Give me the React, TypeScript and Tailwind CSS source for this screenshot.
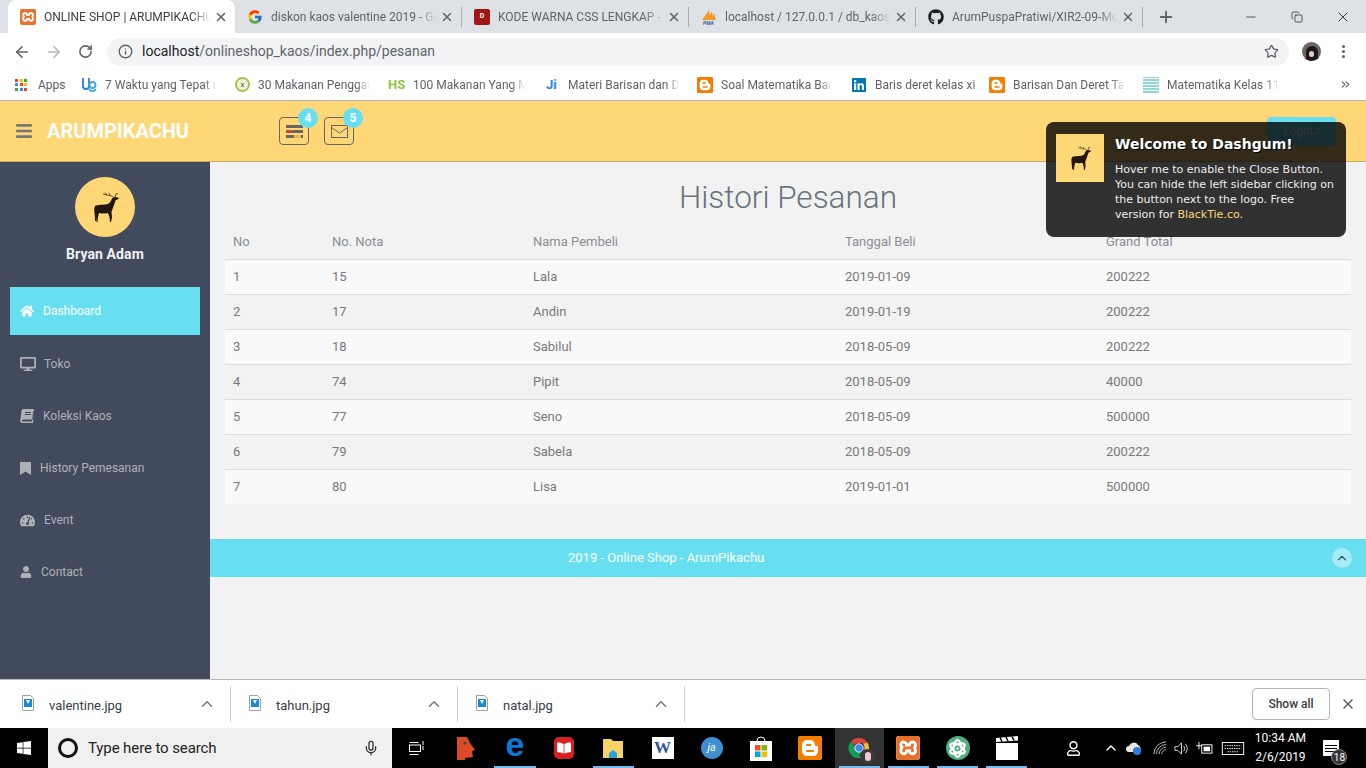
import React from "react";
import { ArrowLeft, ArrowRight, RotateCw, Info, Star, X, Plus, Minus, Copy, ChevronUp, ChevronsRight, Mic } from "lucide-react";
import { FaBars, FaHome, FaDesktop, FaBookOpen, FaTachometerAlt, FaUser, FaGithub, FaLinkedin, FaWindows, FaRegUser, FaAtom } from "react-icons/fa";
import { FcGoogle } from "react-icons/fc";
import { SiBlogger, SiXampp } from "react-icons/si";

const Deer = ({ className = "" }: { className?: string }) => (
  <svg viewBox="0 0 40 40" className={className} fill="#21150e">
    <path d="M10 19C12 17.500 20 18 23 17C25 16 26 14 27 11.500L29 10L33 10.500L34 11.500L30.500 13.500L29 18C28 21 27 23 26.500 25L27 30L26 35L25 35L24.500 30L23 26C20 27 17 26.500 14 26L13 30L12.500 35L11.500 35L11.500 30L11 34L10 34L9.800 28C9 24 9 21 10 19z" />
    <path d="M28.500 10.500C27 8 24 9 22 8L18 7M25 8.500L24 6M22 8L20 5.500M30 10L31 7L33 6.500" stroke="#21150e" strokeWidth="0.7" fill="none" />
  </svg>
);

const Chrome = () => (
  <svg viewBox="0 0 24 24" className="w-[22px] h-[22px]">
    <path d="M12 1a11 11 0 0 1 9.500 5.500H12a5.500 5.500 0 0 0-5 3L3.500 4.500A11 11 0 0 1 12 1z" fill="#db4437" />
    <path d="M21.500 6.500A11 11 0 0 1 12 23l4.800-8.200A5.500 5.500 0 0 0 16 7z" fill="#fbc02d" />
    <path d="M12 23A11 11 0 0 1 3.500 4.500L8 12.500a5.500 5.500 0 0 0 6 3.500z" fill="#0f9d58" />
    <circle cx="12" cy="12" r="4.500" fill="#4285f4" stroke="#fff" strokeWidth="1" />
  </svg>
);

const Thumb = () => (
  <svg viewBox="0 0 12 16" className="w-[12px] h-[16px]">
    <path d="M.5.500h8l3 3v12H.5z" fill="#fff" stroke="#9aa0a6" />
    <rect x="2" y="4" width="8" height="8" fill="#1a86d8" />
    <path d="M4 5h4l-2 4z" fill="#fff" />
  </svg>
);

const Fav = ({ c, children }: { c: string; children?: React.ReactNode }) => (
  <span className={`w-4 h-4 rounded-[2px] flex items-center justify-center text-white text-[7px] font-bold ${c}`}>{children}</span>
);

const tabs = [
  { t: "ONLINE SHOP | ARUMPIKACHU", i: <SiXampp className="text-[#e8702a] w-4 h-4" />, active: true },
  { t: "diskon kaos valentine 2019 - Google", i: <FcGoogle className="w-4 h-4" /> },
  { t: "KODE WARNA CSS LENGKAP - Dian", i: <Fav c="bg-[#a31515]">D</Fav> },
  { t: "localhost / 127.0.0.1 / db_kaos | phpMy", i: <svg viewBox="0 0 16 16" className="w-4 h-4"><path d="M1 11L8 1l1 10zM6 11l5-9 1 9zM10 11l3-7 2 7z" fill="#f09a2a" /><text x="2" y="16" fontSize="5" fontWeight="700" fontStyle="italic" fill="#3a5a8c">PMA</text></svg> },
  { t: "ArumPuspaPratiwi/XIR2-09-Mobile", i: <FaGithub className="w-4 h-4 text-[#1b1f23]" /> },
];

const bookmarks = [
  { w: "w-[154px]", t: "7 Waktu yang Tepat untuk", g: "gap-2", i: <svg viewBox="0 0 16 16" className="w-4 h-4" fill="none" stroke="#2a7de1" strokeWidth="1.800"><path d="M2 1v8a3 3 0 0 0 6 0V1" /><circle cx="11.500" cy="8" r="3" stroke="#3fa9d8" /><path d="M8 12a4 4 0 0 0 7 0" stroke="#3fa9d8" /></svg> },
  { w: "w-[153px]", t: "30 Makanan Penggaruk", g: "gap-2", i: <span className="w-[15px] h-[15px] rounded-full border-2 border-[#a5c24f] bg-[#f2f2d8] text-[8px] flex items-center justify-center text-[#555]">x</span> },
  { w: "w-[154px]", t: "100 Makanan Yang Mengandung", g: "gap-2", i: <span className="text-[#8dc63f] font-bold text-[13px] w-[17px]">HS</span> },
  { w: "w-[155px]", t: "Materi Barisan dan Deret", g: "gap-[11px]", i: <span className="ml-1 text-[#1e88e5] font-bold text-[13px] w-[11px]">Ji</span> },
  { w: "w-[154px]", t: "Soal Matematika Barisan", g: "gap-2", i: <SiBlogger className="w-4 h-4 text-[#f57d00]" /> },
  { w: "w-[138px]", t: "Baris deret kelas xi", g: "gap-2", i: <FaLinkedin className="w-4 h-4 text-[#0077b5]" /> },
  { w: "w-[154px]", t: "Barisan Dan Deret Tak Hingga", g: "gap-2", i: <SiBlogger className="w-4 h-4 text-[#f57d00]" /> },
  { w: "w-[146px]", t: "Matematika Kelas 11 SMA", g: "gap-2", i: <span className="w-4 h-4 bg-[repeating-linear-gradient(0deg,#8fd8d8_0px,#8fd8d8_2px,#ffffff_2px,#ffffff_3px)]" /> },
];

const BookIcon = () => (
  <svg viewBox="0 0 14 14" className="w-[14px] h-[14px]" fill="currentColor">
    <path d="M3.500 0H14l-.8 10.500H3.200C2.400 10.500 2 11 2 11.600s.5 1 1.200 1H12l1-10h1l-1 11.400H2.500C1 14 0 13 .2 11.500L1.500 2C1.700.8 2.400 0 3.500 0zM5 3v1h6V3zm-.2 2v1h6V5z" fillRule="evenodd" />
  </svg>
);

const menu = [
  { t: "Dashboard", i: <FaHome className="w-[14px] h-[14px]" />, g: "gap-[9px]", active: true },
  { t: "Toko", i: <FaDesktop className="w-4 h-4" />, g: "gap-2" },
  { t: "Koleksi Kaos", i: <BookIcon />, g: "gap-[9px]" },
  { t: "History Pemesanan", i: <svg viewBox="0 0 11 13" className="w-[11px] h-[13px]" fill="currentColor"><path d="M0 0h11v13L5.500 9.500 0 13z" /></svg>, g: "gap-[9px]" },
  { t: "Event", i: <FaTachometerAlt className="w-[15px] h-[15px]" />, g: "gap-[9px]" },
  { t: "Contact", i: <FaUser className="w-3 h-3" />, g: "gap-[9px]" },
];

const rows = [
  ["1", "15", "Lala", "2019-01-09", "200222"],
  ["2", "17", "Andin", "2019-01-19", "200222"],
  ["3", "18", "Sabilul", "2018-05-09", "200222"],
  ["4", "74", "Pipit", "2018-05-09", "40000"],
  ["5", "77", "Seno", "2018-05-09", "500000"],
  ["6", "79", "Sabela", "2018-05-09", "200222"],
  ["7", "80", "Lisa", "2019-01-01", "500000"],
];

const Shelf = ({ t, first }: { t: string; first?: boolean }) => (
  <div className={`${first ? "w-[231px] pl-[22px]" : "w-[227px] pl-[18px]"} h-[36px] flex items-center border-r border-[#d0d0d0] pr-[14px] text-[#3c4043]`}>
    <span className="-mt-[3px] flex"><Thumb /></span>
    <span className="ml-[15px] mt-[3px] text-[13px] flex-1">{t}</span>
    <ChevronUp className="w-[18px] h-[18px] text-[#777]" />
  </div>
);

const task = [
  <svg viewBox="0 0 16 16" className="w-[16px] h-[16px]" fill="none" stroke="#fff"><path d="M.5 2.500h9M.5 14.500h9" /><rect x=".5" y="5" width="11" height="6.500" /><path d="M14 1v4M14 6v4" /></svg>,
  <svg viewBox="0 0 20 24" className="w-[20px] h-[24px]"><path d="M1 1h10l3 6 5 7-3 1 1 6-8 1v2H1z" fill="#dc4a26" /><circle cx="9" cy="7" r="1.500" fill="#444" /></svg>,
  <span className="text-[34px] leading-[34px] -mt-[8px] font-bold text-[#0b78d7] font-['Liberation_Sans',sans-serif]">e</span>,
  <span className="w-[20px] h-[22px] bg-[#d6211f] rounded-[5px] flex items-center justify-center"><FaBookOpen className="w-[14px] h-[14px] text-white" /></span>,
  <svg viewBox="0 0 22 22" className="w-[22px] h-[22px]"><path d="M1 2h8l2 2h10v17H1z" fill="#f6d365" /><path d="M7 21v-5l4-3 4 3v5z" fill="#2ba0dd" /></svg>,
  <span className="w-[22px] h-[22px] bg-white flex items-center justify-center text-[#2b579a] font-bold text-[17px] font-['Liberation_Serif',serif]">W</span>,
  <span className="w-[22px] h-[22px] rounded-full bg-[#3d8fd0] flex items-center justify-center text-white text-[11px] italic">ja</span>,
  <svg viewBox="0 0 22 26" className="w-[22px] h-[26px]"><path d="M7 6a4 4 0 0 1 8 0" fill="none" stroke="#fff" /><rect y="6" width="22" height="20" fill="#fff" /><rect x="5" y="10" width="5.500" height="5.500" fill="#f25022" /><rect x="11.500" y="10" width="5.500" height="5.500" fill="#7fba00" /><rect x="5" y="16.500" width="5.500" height="5.500" fill="#00a4ef" /><rect x="11.500" y="16.500" width="5.500" height="5.500" fill="#ffb900" /></svg>,
  <SiBlogger className="w-[24px] h-[24px] text-[#f57d00] bg-white rounded-[3px]" />,
  <span className="relative flex"><Chrome /><span className="absolute right-[-5px] bottom-[-5px] w-[15px] h-[15px] rounded-full bg-[#3b3b3b] flex items-center justify-center"><span className="w-[6px] h-[9px] rounded-full bg-[#f3c9d6]" /></span></span>,
  <SiXampp className="w-[24px] h-[24px] text-[#e8702a] bg-white rounded-[3px]" />,
  <span className="w-[24px] h-[24px] rounded-full bg-[#4fb07f] flex items-center justify-center"><FaAtom className="w-[19px] h-[19px] text-white" /></span>,
  <svg viewBox="0 0 22 24" className="w-[22px] h-[24px]"><rect y="7" width="22" height="17" fill="#fff" /><path d="M0 2l22-2v4.500L0 6z" fill="#fff" /><path d="M4 1.500l2 4M10 1l2 4M16 .500l2 4" stroke="#000" strokeWidth="1.500" /></svg>,
];

export default function App() {
  return (
    <div className="relative h-screen w-[1366px] overflow-hidden flex flex-col bg-white font-['Roboto',sans-serif]">
      {/* tab strip */}
      <div className="h-[33px] bg-[#dee1e6] flex items-end pl-[8px] shrink-0">
        {tabs.map((tab, n) => (
          <div key={n} className={`h-[33px] w-[227px] pl-[12px] flex items-center ${tab.active ? "bg-white rounded-t-[8px]" : ""}`}>
            <span className="w-4 h-4 flex items-center justify-center shrink-0">{tab.i}</span>
            <span className={`ml-[8px] w-[167px] overflow-hidden whitespace-nowrap text-[12px] [mask-image:linear-gradient(to_right,black_88%,transparent)] ${tab.active ? "text-[#3c4043]" : "text-[#5f6368]"}`}>{tab.t}</span>
            <X className="ml-[3px] w-[14px] h-[14px] text-[#5f6368] shrink-0" strokeWidth={2.500} />
            {n > 0 && <span className="ml-[7px] w-px h-[20px] bg-[#a9acb0]" />}
          </div>
        ))}
        <div className="h-[33px] flex items-center ml-[14px]"><Plus className="w-[18px] h-[18px] text-[#5f6368]" strokeWidth={2.500} /></div>
        <div className="h-[33px] flex items-center ml-auto text-[#111]">
          <div className="w-[46px] flex justify-center"><Minus className="w-[14px] h-[14px]" strokeWidth={1.200} /></div>
          <div className="w-[46px] flex justify-center"><Copy className="w-[12px] h-[12px]" strokeWidth={1.300} /></div>
          <div className="w-[46px] flex justify-center"><X className="w-[16px] h-[16px]" strokeWidth={1.200} /></div>
        </div>
      </div>
      {/* toolbar */}
      <div className="h-[36px] shrink-0 flex items-center pt-[1px] bg-white">
        <ArrowLeft className="ml-[13px] w-[18px] h-[18px] text-[#5f6368]" strokeWidth={2.200} />
        <ArrowRight className="ml-[14px] w-[18px] h-[18px] text-[#b5b7ba]" strokeWidth={2.200} />
        <RotateCw className="ml-[15px] w-[15px] h-[15px] text-[#5f6368]" strokeWidth={2.500} />
        <div className="ml-[14px] w-[1182px] h-[28px] rounded-full bg-[#f1f3f4] flex items-center pl-[11px] pr-[10px]">
          <Info className="w-[15px] h-[15px] text-[#5f6368]" strokeWidth={2.200} />
          <span className="ml-[9px] text-[14px] text-[#202124]">localhost<span className="text-[#5f6368]">/onlineshop_kaos/index.php/pesanan</span></span>
          <Star className="ml-auto w-[15px] h-[15px] text-[#5f6368]" strokeWidth={2} />
        </div>
        <span className="ml-[13px] w-[19px] h-[19px] rounded-full bg-[#6f6565] overflow-hidden flex items-end justify-center">
          <span className="w-[12px] h-[15px] rounded-t-full bg-[#1d1719] flex justify-center pt-[5px]"><span className="w-[5px] h-[6px] rounded-full bg-[#e8c8c4]" /></span>
        </span>
        <span className="ml-[21px] flex flex-col gap-[2px]">
          <span className="w-[3px] h-[3px] rounded-full bg-[#5f6368]" /><span className="w-[3px] h-[3px] rounded-full bg-[#5f6368]" /><span className="w-[3px] h-[3px] rounded-full bg-[#5f6368]" />
        </span>
      </div>
      {/* bookmarks */}
      <div className="h-[31px] shrink-0 flex items-center text-[12px] text-[#5f6368] bg-white">
        <span className="ml-[15px] w-[12px] h-[12px] grid grid-cols-3 gap-[1.500px]">
          {["bg-[#ea4335]", "bg-[#fbbc05]", "bg-[#34a853]", "bg-[#4285f4]", "bg-[#ea4335]", "bg-[#fbbc05]", "bg-[#34a853]", "bg-[#4285f4]", "bg-[#ea4335]"].map((c, i) => <span key={i} className={c} />)}
        </span>
        <span className="ml-[11px] w-[43px]">Apps</span>
        {bookmarks.map((b, i) => (
          <div key={i} className={`${b.w} flex items-center ${b.g} shrink-0`}>
            <span className="flex shrink-0">{b.i}</span>
            <span className="w-[112px] overflow-hidden whitespace-nowrap [mask-image:linear-gradient(to_right,black_88%,transparent)]">{b.t}</span>
          </div>
        ))}
        <ChevronsRight className="ml-[50px] w-[13px] h-[13px] text-[#5f6368]" />
      </div>
      <div className="h-px shrink-0 bg-[#b8b8b8]" />
      {/* app header */}
      <header className="h-[61px] shrink-0 bg-[#ffd777] border-b border-[#c9ac68] flex items-center">
        <FaBars className="ml-[15px] w-[18px] h-[18px] text-[#777]" />
        <span className="ml-[14px] w-[232px] text-[20px] font-bold text-white">ARUMPIKACHU</span>
        <button className="relative w-[30px] h-[28px] border border-[#666] rounded-[4px] flex items-center justify-center">
          <svg viewBox="0 0 17 13" className="w-[17px] h-[13px]">
            <rect width="17" height="3" fill="#666" />
            <rect y="5" width="17" height="3" fill="#666" /><rect y="5" width="7" height="3" fill="#b5533c" />
            <rect y="10" width="17" height="3" fill="#666" /><rect x="8" y="10" width="7" height="3" fill="#e8b84a" />
          </svg>
          <span className="absolute -top-[10px] -right-[10px] w-[20px] h-[20px] rounded-full bg-[#68dff0] text-white text-[12px] font-bold flex items-center justify-center">4</span>
        </button>
        <button className="relative ml-[15px] w-[30px] h-[28px] border border-[#666] rounded-[4px] flex items-center justify-center">
          <svg viewBox="0 0 17 13" className="w-[17px] h-[13px]" fill="none" stroke="#666"><rect x=".5" y=".5" width="16" height="12" /><path d="M.5 2.500l8 5.500 8-5.500" /></svg>
          <span className="absolute -top-[10px] -right-[10px] w-[20px] h-[20px] rounded-full bg-[#68dff0] text-white text-[12px] font-bold flex items-center justify-center">5</span>
        </button>
        <button className="ml-auto mr-[30px] w-[69px] h-[29px] rounded-[4px] bg-[#68dff0] text-[#f2f2f2] text-[12px]">Logout</button>
      </header>
      {/* body */}
      <div className="flex-1 min-h-0 flex">
        <aside className="w-[210px] shrink-0 bg-[#424a5d] flex flex-col items-center pt-[15px]">
          <div className="w-[60px] h-[60px] rounded-full bg-[#ffd777] flex items-center justify-center">
            <Deer className="w-[40px] h-[40px]" />
          </div>
          <div className="mt-[7px] text-[14px] font-bold tracking-[0.1px] text-[#f2f2f2] leading-[20px]">Bryan Adam</div>
          <nav className="mt-[23px] w-[190px] flex flex-col gap-[4px]">
            {menu.map((m) => (
              <div key={m.t} className={`h-[48px] flex items-center pl-[10px] text-[12px] ${m.g} ${m.active ? "bg-[#68dff0] text-white" : "text-[#aeb2b7] pt-[2px]"}`}>
                {m.i}<span>{m.t}</span>
              </div>
            ))}
          </nav>
        </aside>
        <main className="flex-1 bg-[#f2f2f2] px-[15px] flex flex-col">
          <h1 className="mt-[16px] h-[40px] text-center text-[31.500px] leading-[40px] font-light text-[#68737d]">Histori Pesanan</h1>
          <table className="mt-[6px] w-[1126px] table-fixed border-collapse text-[13px] text-[#797979]">
            <colgroup>
              <col className="w-[99px]" /><col className="w-[201px]" /><col className="w-[312px]" /><col className="w-[261px]" /><col />
            </colgroup>
            <thead>
              <tr className="h-[35px] border-b border-[#dddddd]">
                {["No", "No. Nota", "Nama Pembeli", "Tanggal Beli", "Grand Total"].map((h) => (
                  <th key={h} className="px-[8px] text-left font-normal text-[#8a8f94]">{h}</th>
                ))}
              </tr>
            </thead>
            <tbody>
              {rows.map((r, i) => (
                <tr key={i} className={`h-[35px] border-b border-[#dddddd] last:border-b-0 ${i % 2 === 0 ? "bg-[#f9f9f9]" : "bg-[#f2f2f2]"}`}>
                  {r.map((c, j) => <td key={j} className="px-[8px]">{c}</td>)}
                </tr>
              ))}
            </tbody>
          </table>
          <footer className="mt-[35px] -mx-[15px] h-[38px] shrink-0 bg-[#68dff0] flex items-center text-white text-[13px] pl-[358px]">
            <span>2019 - Online Shop - ArumPikachu</span>
            <span className="ml-auto mr-[14px] w-[20px] h-[20px] rounded-full bg-white/40 flex items-center justify-center">
              <ChevronUp className="w-[14px] h-[14px] text-[#2a5b63]" />
            </span>
          </footer>
        </main>
      </div>
      {/* downloads */}
      <div className="h-[49px] shrink-0 bg-white border-t border-[#b8b8b8] flex items-center">
        <div className="flex"><Shelf t="valentine.jpg" first /><Shelf t="tahun.jpg" /><Shelf t="natal.jpg" /></div>
        <button className="ml-auto w-[78px] h-[32px] border border-[#b5b5b5] rounded-[4px] text-[12px] font-medium text-[#3c4043]">Show all</button>
        <X className="ml-[10px] mr-[10px] w-[16px] h-[16px] text-[#666]" strokeWidth={2.500} />
      </div>
      {/* taskbar */}
      <div className="h-[40px] shrink-0 bg-black flex items-center text-white">
        <div className="w-[48px] flex justify-center"><FaWindows className="w-[16px] h-[16px]" /></div>
        <div className="w-[344px] h-[40px] bg-[#f0f0f0] flex items-center pl-[10px] pr-[13px] text-[#222]">
          <span className="w-[20px] h-[20px] rounded-full border-[3px] border-[#111]" />
          <span className="ml-[10px] text-[15px] tracking-[-0.1px]">Type here to search</span>
          <Mic className="ml-auto w-[16px] h-[16px] text-[#333]" />
        </div>
        {task.map((ic, i) => (
          <div key={i} className={`w-[49.200px] h-[40px] flex items-center justify-center relative ${i === 9 ? "bg-[#333]" : ""}`}>
            {ic}
            {[2, 4, 9, 10, 11, 12].includes(i) && <span className="absolute bottom-0 left-[4px] right-[4px] h-[2px] bg-[#76b9ed]" />}
          </div>
        ))}
        <FaRegUser className="ml-[35px] w-[15px] h-[15px]" />
        <ChevronUp className="ml-[22px] w-[16px] h-[16px]" />
        <svg viewBox="0 0 18 16" className="ml-[6px] w-[18px] h-[16px]"><path d="M4 12a3 3 0 0 1 0-6 5 5 0 0 1 9-1 4 4 0 0 1 1 7z" fill="#e8e8e8" /><circle cx="12" cy="11" r="4" fill="#2a7de1" /></svg>
        <svg viewBox="0 0 16 16" className="ml-[10px] w-[14px] h-[14px]" fill="none" stroke="#ccc"><path d="M1 15a14 14 0 0 1 14-14M4 15a11 11 0 0 1 11-11M7 15a8 8 0 0 1 8-8M10 15a5 5 0 0 1 5-5" /></svg>
        <svg viewBox="0 0 16 16" className="ml-[7px] w-[15px] h-[15px]" fill="none" stroke="#ddd"><path d="M1 6h3l4-4v12l-4-4H1zM10 5a4 4 0 0 1 0 6M12 3a7 7 0 0 1 0 10" /></svg>
        <svg viewBox="0 0 18 14" className="ml-[7px] w-[17px] h-[13px]"><path d="M0 4h6M3 0v8" stroke="#fff" /><rect x="6" y="3" width="11" height="9" fill="none" stroke="#fff" /><rect x="8" y="5" width="7" height="5" fill="#fff" /></svg>
        <svg viewBox="0 0 24 14" className="ml-[8px] w-[24px] h-[13px]" fill="none" stroke="#fff"><rect x=".5" y=".5" width="23" height="13" /><path d="M3 4h18M3 7h18M6 10.500h12" strokeDasharray="1.500 1" /></svg>
        <div className="ml-[2px] w-[66px] text-center text-[12px] leading-[19px]"><div>10:34 AM</div><div>2/6/2019</div></div>
        <div className="relative ml-[10px] w-[16px] h-[16px] bg-white flex flex-col justify-center gap-[2px] px-[2px]">
          <span className="h-px bg-black" /><span className="h-px bg-black" /><span className="h-px bg-black" />
          <span className="absolute -right-[8px] -bottom-[9px] w-[16px] h-[16px] rounded-full bg-[#333] border border-[#888] text-[10px] flex items-center justify-center text-white">18</span>
        </div>
      </div>
      {/* notification overlay */}
      <div className="absolute left-[1046px] top-[122px] w-[300px] h-[115px] rounded-[8px] bg-black/80 text-[#eeeeee] font-['DejaVu_Sans',sans-serif] flex pl-[10px] pt-[12px]">
        <div className="w-[48px] h-[48px] bg-[#ffd777] flex items-center justify-center shrink-0">
          <Deer className="w-[32px] h-[32px]" />
        </div>
        <div className="ml-[11px] w-[221px]">
          <div className="text-[14px] font-bold leading-[20px] text-white [text-shadow:1px_1px_0_#000]">Welcome to Dashgum!</div>
          <p className="mt-[8px] text-[11px] leading-[15px]">Hover me to enable the Close Button. You can hide the left sidebar clicking on the button next to the logo. Free version for <span className="text-[#ffd777]">BlackTie.co</span>.</p>
        </div>
      </div>
    </div>
  );
}
